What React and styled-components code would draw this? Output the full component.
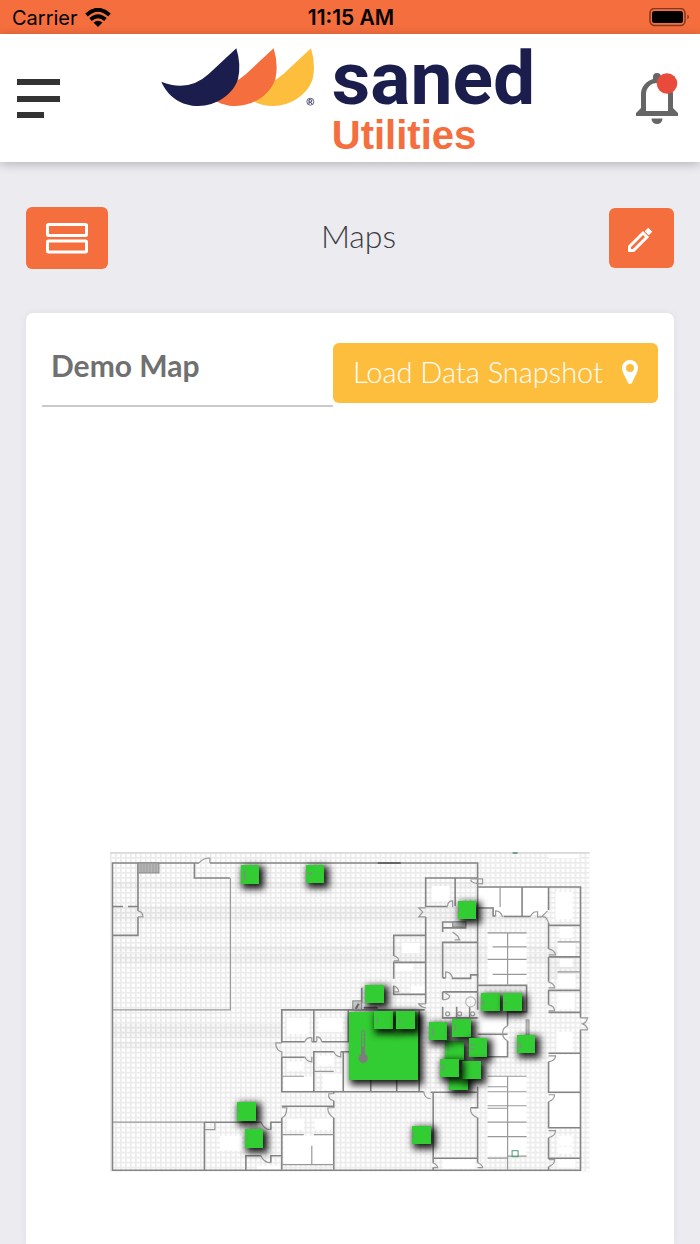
import React from "react";
import styled, { createGlobalStyle } from "styled-components";

const orange = "#f56e3e";
const navy = "#1b1d4d";
const yellow = "#fdbe3d";

const GlobalStyle = createGlobalStyle`
  *, *::before, *::after { box-sizing: border-box; }
  body {
    margin: 0;
    background: #ebebf0;
    font-family: Lato, "Open Sans", sans-serif;
  }
  h1, h2, p { margin: 0; }
  button { border: 0; padding: 0; font: inherit; cursor: pointer; }
  svg { display: block; }
`;

const Page = styled.div`
  min-height: 100vh;
  display: flex;
  flex-direction: column;
`;

const StatusBar = styled.div`
  display: grid;
  grid-template-columns: 1fr auto 1fr;
  align-items: center;
  height: 34px;
  padding: 2px 10px 0 12px;
  background: ${orange};
  color: #000;
  font-family: Inter, sans-serif;
  font-size: 20px;
  line-height: 32px;
`;

const Carrier = styled.div`
  display: flex;
  align-items: center;
  gap: 7px;
`;

const Clock = styled.time`
  font-size: 21px;
  font-weight: 600;
`;

const Battery = styled.svg`
  justify-self: end;
`;

const Header = styled.header`
  position: relative;
  display: flex;
  align-items: center;
  justify-content: space-between;
  height: 128px;
  padding: 0 22px 0 17px;
  background: #fff;
  box-shadow: 0 2px 10px rgba(0, 0, 0, 0.24);
`;

const PlainButton = styled.button`
  background: none;
  color: #666;
`;

const Brand = styled.a`
  display: flex;
  align-items: flex-start;
  gap: 17px;
  height: 100px;
  text-decoration: none;
`;

const BrandText = styled.span`
  display: flex;
  flex-direction: column;
`;

const BrandName = styled.span`
  color: ${navy};
  font-family: Roboto, sans-serif;
  font-size: 75px;
  font-weight: 700;
  line-height: 60px;
`;

const BrandUnit = styled.span`
  color: ${orange};
  font-family: "Liberation Sans", sans-serif;
  font-size: 40px;
  font-weight: 700;
  line-height: 54px;
`;

const Toolbar = styled.div`
  display: flex;
  align-items: center;
  justify-content: space-between;
  padding: 45px 26px 44px;
`;

const IconButton = styled.button`
  display: flex;
  align-items: center;
  justify-content: center;
  width: ${(p) => (p.$wide ? 82 : 65)}px;
  height: ${(p) => (p.$wide ? 62 : 60)}px;
  border-radius: 6px;
  background: ${orange};
  color: #fff;
`;

const Title = styled.h1`
  padding-bottom: 4px;
  color: #3c3c42;
  font-size: 32px;
  font-weight: 300;
  line-height: 40px;
`;

const Card = styled.main`
  flex: 1;
  display: flex;
  flex-direction: column;
  margin: 0 26px;
  padding: 30px 0 70px;
  border-radius: 7px 7px 0 0;
  background: #fff;
  box-shadow: 0 0 8px rgba(0, 0, 0, 0.06);
`;

const CardHeader = styled.div`
  display: flex;
  align-items: flex-start;
  padding: 0 16px;
`;

const MapName = styled.h2`
  flex: 1;
  height: 64px;
  padding-left: 9px;
  border-bottom: 2px solid #cacaca;
  color: #707070;
  font-size: 30px;
  font-weight: 700;
  line-height: 44px;
`;

const SnapshotButton = styled.button`
  display: flex;
  align-items: center;
  justify-content: space-between;
  gap: 16px;
  min-width: 325px;
  height: 60px;
  padding: 0 20px;
  border-radius: 6px;
  background: ${yellow};
  color: #fff;
  font-size: 29px;
  font-weight: 300;
  line-height: 40px;
`;

const ButtonText = styled.span`
  padding-bottom: 2px;
`;

const MapFrame = styled.div`
  position: relative;
  width: 74%;
  margin: auto auto 0;
`;

const Plan = styled.svg`
  width: 100%;
  height: auto;
`;

const Pin = styled.button`
  position: absolute;
  display: flex;
  align-items: center;
  left: ${(p) => ((p.$x - 110) / 480) * 100}%;
  top: ${(p) => ((p.$y - 850) / 324) * 100}%;
  width: ${(p) => ((p.$size || 18.5) / 480) * 100}%;
  aspect-ratio: 1;
  background: #32cd32;
  box-shadow: 3px 3px 7px 2px rgba(0, 0, 0, 0.9);
`;

const WING = "M481 243 Q562 276 624 219 L706 143 Q721 192 711 235 C697 281 645 316 592 316 C541 316 500 287 481 243Z";

function Logo() {
  return (
    <svg width="154" height="59" viewBox="480 142 462 177" aria-hidden="true">
      <path d={WING} transform="translate(224)" fill={yellow} />
      <path d={WING} transform="translate(112)" fill={orange} />
      <path d={WING} fill={navy} />
      <circle cx="928" cy="303" r="10.5" fill="none" stroke={navy} strokeWidth="2" />
      <path d="M924 310V297h5a3.500 3.500 0 0 1 0 7h-5m4 0 5 6" fill="none" stroke={navy} strokeWidth="2.500" />
    </svg>
  );
}

const WALLS = [
  "M112.500 1171V863H199M210 863H478V977M112 1170.500H581V1030M581 1018V887H478",
  "M138 863V911M138 917V935.500H112M112 906.500H123M128 906.500H138M194.500 863V878H230",
  "M204.500 1171V1122.500H261M246 1171V1156H261M271 1130V1122.500H282M271 1163V1156H282",
  "M282 1043V1010H425M282 1057V1092H424M314 1010V1042M282 1042H305M312 1042H317M322 1042H350M348.500 1010V1042",
  "M282 1057.500H305M314 1092V1052H334M341 1052H350M343.500 1052V1092M371 1080V1092M397 1080V1092M419.500 1010V1092",
  "M282 1106.500H334M282 1118V1170M334 1118V1170M334 1092V1094M334 1101V1108",
  "M426 907V878H478M426 917V1004M426 935.500H394V956M394 986V994.500H426M394 979V962.500H426M362 988V1003",
  "M455.500 878V906M426 906.500H448M478 908H493.500V916H496M504 916.500H531M522.500 887V916M549 887V910M549 923V949M549 925.500H581M549 957V982M549 957H581M549 990V1005M549 990.500H581",
  "M443 932V922H466V928H443M443 978V942.500H478M452 978.500H471V975H478V985M443 978H446M443 992H478M443 992V1000M443 1007V1018H478M457 1007V1018M470 1007V1018",
  "M478 1010V985.500H527V1012H508V1026M508 1041V1057H478M478 1034.500H508",
  "M549 1012.500H581M549 1053.500H581M549 1062V1092.500H581M549 1102V1128H581M549 1138V1158.500H581M549 1167V1171",
  "M431 1092.500H478M433.500 1092V1163M478 1087V1108H471M478 1118V1163M433 1158.500H478M433.500 1168V1171",
];

const THIN_WALLS = [
  "M230.500 878V1010H113M113 1122.500H204M205 1130H215V1123",
  "M282 1076.500H304M314 1071.500H334M282 1135H304M314 1135H334M312 1146V1165M282 1165H334",
  "M500.500 887V907M488 933H527M493 947H527M488 959.500H527M493 974.500H527M508 933V985M558 942H581M558 972H581",
  "M488 1076.500H527M508 1076V1170M488 1087H508M488 1092H527M488 1106H527M488 1108.500H508M488 1122.500H527M488 1137H527M508 1156.500H527M488 1158.500H508",
];

const DOORS = [
  "M199 863Q203 858 210 858V863M138 911Q143 912 143 917H138M261 1122Q264 1130 271 1130M261 1156Q264 1163 271 1163",
  "M282 1043H276V1045Q277 1051 282 1052V1057M305 1042Q307 1037 312 1038V1042M322 1042Q321 1037 317 1037V1042M305 1057Q307 1062 312 1062V1057M334 1052Q336 1057 341 1057V1052",
  "M334 1094H329Q328 1100 334 1101M282 1118Q287 1116 287 1108H282M334 1118Q328 1115 328 1108H334",
  "M426 908H419L423 912L419 917H426M394 956Q399 957 399 961H394M394 986Q399 988 399 992H394M426 1004H419Q421 1007 426 1008",
  "M448 906Q448 901 453 901V907M496 916V911Q501 911 503 917M531 916Q534 911 538 912V917H542L548 911M541 917Q547 915 549 923",
  "M549 949Q555 950 556 955H549M549 982Q555 984 555 988H549M549 1005Q555 1006 555 1011H549M549 1062Q556 1061 556 1056H549M549 1102Q555 1100 555 1095H549M549 1138Q556 1136 556 1131H549M549 1167Q555 1165 555 1160H549",
  "M581 1018H588Q587 1023 583 1024Q588 1026 588 1030H581M471 1108Q470 1115 478 1118M433 1163Q438 1165 438 1168H433M478 1163Q483 1165 483 1168H478M424 1092Q425 1099 431 1099",
  "M508 1026Q503 1028 503 1033Q503 1039 508 1041M446 978V972Q451 972 453 978M453 932L458 936L460 940H455M443 1000Q450 1000 450 996L444 992M471 880Q472 884 483 884V879H471",
];

const ROOMS = [
  [478, 888, 70, 19], [494, 907, 54, 8], [488, 934, 39, 50], [556, 892, 17, 27], [432, 886, 18, 15],
  [560, 927, 13, 11], [558, 943, 18, 13], [560, 959, 13, 8], [558, 974, 18, 14], [558, 993, 17, 16],
  [402, 943, 18, 10], [396, 964, 17, 7], [411, 986, 15, 7], [287, 1018, 22, 16], [319, 1018, 24, 14],
  [287, 1062, 17, 9], [284, 1077, 29, 14], [317, 1056, 17, 10], [323, 1074, 20, 16], [344, 1054, 75, 37],
  [287, 1119, 17, 11], [315, 1119, 17, 11], [284, 1136, 49, 28], [220, 1136, 22, 15], [257, 1166, 23, 4],
  [488, 1077, 39, 79], [550, 1055, 30, 37], [550, 1094, 30, 33], [558, 1136, 15, 10], [558, 1147, 15, 7],
  [558, 1160, 18, 8], [557, 1032, 16, 20], [480, 1013, 27, 19], [480, 1036, 27, 20], [443, 1160, 33, 9],
  [549, 854, 31, 4],
];

const BANDS = [
  [113, 906, 436, 15], [113, 946, 436, 5], [113, 954, 436, 9], [113, 1024, 168, 14], [113, 1042, 168, 6],
  [113, 882, 365, 6], [549, 946, 32, 34],
];

function FloorPlan() {
  return (
    <Plan viewBox="110 850 480 324" role="img" aria-label="Floor plan">
      <defs>
        <pattern id="grid" x="110" y="852" width="5" height="5" patternUnits="userSpaceOnUse">
          <path d="M0 1H5M1 0V5" stroke="#f1f1f1" strokeWidth="2" />
          <path d="M0 0.500H5M0.500 0V5" stroke="#ebebeb" />
        </pattern>
      </defs>
      <rect x="110" y="852" width="480" height="320" fill="url(#grid)" />
      {BANDS.map(([x, y, w, h], i) => (
        <rect key={i} x={x} y={y} width={w} height={h} fill="#000" opacity="0.03" />
      ))}
      <path d="M110 853H590" stroke="#ccc" />
      {ROOMS.map(([x, y, w, h], i) => (
        <rect key={i} x={x} y={y} width={w} height={h} fill="#fff" />
      ))}
      <g fill="none" stroke="#858585" strokeWidth="1.600">
        {WALLS.map((d) => <path key={d} d={d} />)}
      </g>
      <g fill="none" stroke="#999" strokeWidth="1.200">
        {THIN_WALLS.map((d) => <path key={d} d={d} />)}
        {DOORS.map((d) => <path key={d} d={d} />)}
        <circle cx="471" cy="1002" r="5" stroke="#bbb" />
        <circle cx="448" cy="1014" r="2" />
        <circle cx="460" cy="1014" r="2" />
        <circle cx="473" cy="1014" r="2" />
      </g>
      <path d="M378 863H401" stroke="#666" strokeWidth="2" />
      <rect x="138" y="863" width="21" height="10" fill="#b5b5b5" stroke="#888" />
      <path d="M141 864V873M144 864V873M147 864V873M150 864V873M153 864V873M156 864V873" stroke="#888" strokeWidth="0.500" />
      <rect x="353" y="1001" width="9" height="9" fill="#c4c4c4" stroke="#888" />
      <path d="M356 1009L359 1004M364 1008H378" stroke="#666" strokeWidth="2" />
      <rect x="453" y="922" width="13" height="5" fill="#bbb" stroke="#888" />
      <rect x="526.500" y="1020" width="3" height="17" fill="#bbb" stroke="#888" strokeWidth="0.700" />
      <path d="M513 853H518" stroke="#4c8f70" strokeWidth="1.500" />
      <rect x="512.500" y="1151" width="6" height="6" fill="none" stroke="#4c9a75" />
    </Plan>
  );
}

const SENSORS = [
  { x: 240.5, y: 865, mark: "M4 6V14M3 14H6" },
  { x: 305.5, y: 864.5, mark: "M2 7L4 10L6 8" },
  { x: 458, y: 900.5, mark: "M1 7V11" },
  { x: 365.5, y: 984.5 },
  { x: 349.5, y: 1011.5, size: 68.5, thermometer: true },
  { x: 374.5, y: 1010.5, mark: "M3 7L4 10L3 12" },
  { x: 396.5, y: 1010.5, mark: "M3 8L4 10L3 12" },
  { x: 481.5, y: 992.5, mark: "M1 8L3 10L1 12" },
  { x: 503.5, y: 992.5, mark: "M2 10H4" },
  { x: 449.5, y: 1071 },
  { x: 445.5, y: 1041, mark: "M3 5V11" },
  { x: 429, y: 1021.5, mark: "M4 6V14" },
  { x: 452.5, y: 1018.5, mark: "M2 6Q6 8 2 12" },
  { x: 469, y: 1038, mark: "M1 7H5M1 11H5" },
  { x: 462.5, y: 1060.5, mark: "M3 8V10" },
  { x: 440.5, y: 1058.5, mark: "M1 5Q6 7 2 12" },
  { x: 517, y: 1034.5, mark: "M3 7V13M1 12H5" },
  { x: 237, y: 1102, mark: "M1 9H3" },
  { x: 244.5, y: 1129, mark: "M1 10H3" },
  { x: 412.5, y: 1125.5, mark: "M1 7V12" },
];

function Sensor({ x, y, size, mark, thermometer }) {
  return (
    <Pin type="button" aria-label="Sensor" $x={x} $y={y} $size={size}>
      {thermometer && (
        <svg width="100%" viewBox="0 0 68 68" fill="#7d7d7d">
          <circle cx="14" cy="46" r="4.600" />
          <path d="M12.500 42V20a1.500 1.500 0 0 1 3 0V42Z" fill="none" stroke="#7d7d7d" />
          <path d="M12.500 34H15.500V44H12.500ZM14 22H16V23H14ZM14 26H16V27H14ZM14 30H16V31H14Z" />
        </svg>
      )}
      {mark && (
        <svg width="100%" viewBox="0 0 19 19" fill="none" stroke="#7d8f7d" strokeWidth="1.400">
          <path d={mark} />
        </svg>
      )}
    </Pin>
  );
}

export default function App() {
  return (
    <>
      <GlobalStyle />
      <Page>
        <StatusBar>
          <Carrier>
            <span>Carrier</span>
            <svg width="26" height="20" viewBox="0 0 26 20" aria-label="Wi-Fi">
              <path d="M1.500 7Q13 -3.500 24.500 7M5.500 11.500Q13 5 20.500 11.500" fill="none" stroke="#000" strokeWidth="3.800" />
              <path d="M8.500 14.500Q13 11 17.500 14.500L13 19Z" />
            </svg>
          </Carrier>
          <Clock>11:15 AM</Clock>
          <Battery width="41" height="20" viewBox="0 0 41 20" aria-label="Battery full">
            <rect x="1" y="0.500" width="35" height="17" rx="4.500" fill="none" stroke="#000" strokeOpacity="0.480" strokeWidth="1.500" />
            <rect x="3" y="3" width="31" height="12" rx="2.500" />
            <path d="M38.500 6.500Q41 9 38.500 11.500Z" fillOpacity="0.600" />
          </Battery>
        </StatusBar>

        <Header>
          <PlainButton type="button" aria-label="Menu">
            <svg width="43" height="40" viewBox="0 0 43 40" fill="#333">
              <rect y="1" width="43" height="6" />
              <rect y="18" width="43" height="6" />
              <rect y="34" width="27" height="6" />
            </svg>
          </PlainButton>
          <Brand href="#" aria-label="saned Utilities">
            <Logo />
            <BrandText>
              <BrandName>saned</BrandName>
              <BrandUnit>Utilities</BrandUnit>
            </BrandText>
          </Brand>
          <PlainButton type="button" aria-label="Notifications">
            <svg width="42" height="51" viewBox="0 0 42 51">
              <path d="M21 0a4 4 0 0 0-4 4V6C10 8 5 14 5 21V35L0 40V43H42V40L37 35V21C37 14 32 8 25 6V4a4 4 0 0 0-4-4ZM10 38V21a11 11 0 0 1 22 0V38Z" fill="#666" fillRule="evenodd" />
              <path d="M15.500 45.500H26.500a5.500 5.500 0 0 1-11 0Z" fill="#666" />
              <circle cx="31" cy="10.500" r="10.300" fill="#e84a3c" />
            </svg>
          </PlainButton>
        </Header>

        <Toolbar>
          <IconButton type="button" $wide aria-label="Layout">
            <svg width="44" height="32" viewBox="0 0 44 32" fill="none" stroke="#fff" strokeWidth="3">
              <rect x="2.500" y="2.500" width="39" height="11" rx="1" />
              <rect x="2.500" y="19" width="39" height="11" rx="1" />
            </svg>
          </IconButton>
          <Title>Maps</Title>
          <IconButton type="button" aria-label="Edit">
            <svg width="26" height="30" viewBox="0 -3 26 30" fill="none" stroke="#fff">
              <path d="M1.500 20.500 15 7 19 11 5.500 24.500H1.500Z" strokeWidth="3" />
              <path d="M18.500 3.500 22.500 7.500" strokeWidth="5" strokeLinejoin="round" />
            </svg>
          </IconButton>
        </Toolbar>

        <Card>
          <CardHeader>
            <MapName>Demo Map</MapName>
            <SnapshotButton type="button">
              <ButtonText>Load Data Snapshot</ButtonText>
              <svg width="16" height="26" viewBox="0 0 16 26" fill="#fff" aria-hidden="true">
                <path fillRule="evenodd" d="M8 0a8 8 0 0 1 8 8C16 12 13 16 10.500 22Q9.500 24 8 24T5.500 22C3 16 0 12 0 8A8 8 0 0 1 8 0ZM8 4a4 4 0 1 0 0 8 4 4 0 0 0 0-8Z" />
              </svg>
            </SnapshotButton>
          </CardHeader>
          <MapFrame>
            <FloorPlan />
            {SENSORS.map((s) => (
              <Sensor key={`${s.x}-${s.y}`} {...s} />
            ))}
          </MapFrame>
        </Card>
      </Page>
    </>
  );
}
